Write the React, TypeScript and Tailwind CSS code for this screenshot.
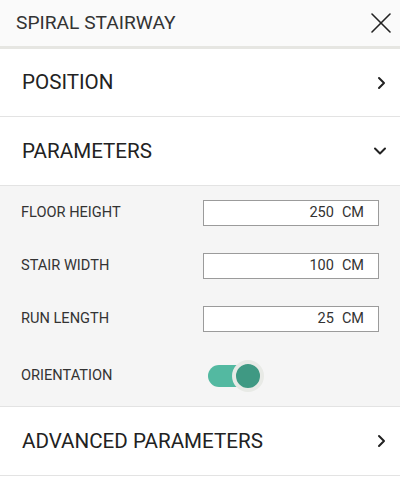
import { useState } from 'react';

const font = { fontFamily: 'Roboto, "Noto Sans", sans-serif' };

function ChevronRight() {
  return (
    <svg width="12" height="14" viewBox="0 0 12 14" fill="none" stroke="#222" strokeWidth="2" strokeLinecap="round" strokeLinejoin="round">
      <polyline points="4 2 9 7 4 12" />
    </svg>
  );
}

function ChevronDown() {
  return (
    <svg width="14" height="10" viewBox="0 0 14 10" fill="none" stroke="#222" strokeWidth="2" strokeLinecap="round" strokeLinejoin="round">
      <polyline points="2 2.5 7 7.5 12 2.5" />
    </svg>
  );
}

function Field({ label, value }: { label: string; value: number }) {
  return (
    <div className="flex h-[25px] items-center">
      <span className="w-[203px] shrink-0 pl-[21px] text-[14.6px] text-[#333]">{label}</span>
      <div className="flex h-[26px] w-[176px] items-center justify-end border border-[#9b9b9b] bg-white pr-[14px] text-[14.5px] text-[#333]">
        <span>{value}</span>
        <span className="ml-[8px]">CM</span>
      </div>
    </div>
  );
}

export default function App() {
  const [on, setOn] = useState(true);

  return (
    <div className="h-[483px] w-[400px] bg-white" style={font}>
      {/* header */}
      <div className="flex h-[46px] items-center justify-between bg-[#fafafa] pl-[16px] pr-[9px]">
        <span className="text-[19.2px] text-[#333]">SPIRAL STAIRWAY</span>
        <svg width="20" height="20" viewBox="0 0 20 20" stroke="#222" strokeWidth="1.6" strokeLinecap="round">
          <line x1="1" y1="1" x2="19" y2="19" />
          <line x1="19" y1="1" x2="1" y2="19" />
        </svg>
      </div>
      <div className="h-[3px] bg-[#e6e6e2]" />

      <div className="flex h-[68px] items-center justify-between border-b border-[#e3e3e3] pl-[22px] pr-[13px]">
        <span className="text-[20.6px] text-[#222]">POSITION</span>
        <ChevronRight />
      </div>

      <div className="flex h-[69px] items-center justify-between border-b border-[#e3e3e3] pl-[22px] pr-[13px]">
        <span className="text-[20.6px] text-[#222]">PARAMETERS</span>
        <ChevronDown />
      </div>

      {/* parameters body */}
      <div className="flex h-[221px] flex-col gap-[28px] border-b border-[#e3e3e3] bg-[#f5f5f5] pt-[14px]">
        <Field label="FLOOR HEIGHT" value={250} />
        <Field label="STAIR WIDTH" value={100} />
        <Field label="RUN LENGTH" value={25} />
        <div className="mt-[1px] flex h-[32px] items-center">
          <span className="w-[208px] shrink-0 pl-[21px] text-[14.6px] text-[#333]">ORIENTATION</span>
          <button
            onClick={() => setOn(!on)}
            className="relative flex h-[32px] w-[58px] items-center"
          >
            <span className="absolute left-0 top-[5px] h-[22px] w-[46px] rounded-full bg-[#53b9a1]" />
            <span className="absolute left-[24px] top-0 h-[32px] w-[32px] rounded-full border-[4px] border-[#e8eae6] bg-[#3f9983]" />
          </button>
        </div>
      </div>

      <div className="flex h-[69px] items-center justify-between border-b border-[#e3e3e3] pl-[22px] pr-[13px]">
        <span className="text-[20.6px] text-[#222]">ADVANCED PARAMETERS</span>
        <ChevronRight />
      </div>
    </div>
  );
}
